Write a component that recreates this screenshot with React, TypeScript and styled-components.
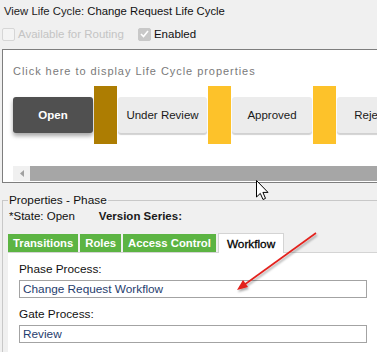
import { createGlobalStyle } from 'styled-components';
import styled from 'styled-components';

const GlobalStyle = createGlobalStyle`
  html, body {
    margin: 0;
    padding: 0;
    background: #f0f0f0;
    overflow: hidden;
  }
  body {
    font-family: 'Liberation Sans', Arial, sans-serif;
    color: #111;
  }
`;

const Page = styled.div`
  position: relative;
  width: 377px;
  height: 352px;
  overflow: hidden;
`;

const Header = styled.div`
  padding: 4px 0 0 4px;
  font-size: 11.3px;
  line-height: 14px;

  .label {
    color: #222;
  }
`;

const CheckRow = styled.div`
  display: flex;
  align-items: center;
  height: 20px;
  margin-top: 6px;
  margin-left: -2px;
  font-size: 11.5px;
`;

const Check = styled.label<{ $disabled?: boolean }>`
  display: flex;
  align-items: center;
  gap: 3px;
  margin-right: 14px;
  color: ${p => (p.$disabled ? '#c4c4c4' : '#111')};
`;

const Box = styled.span<{ $checked?: boolean }>`
  display: inline-flex;
  align-items: center;
  justify-content: center;
  width: 13px;
  height: 13px;
  box-sizing: border-box;
  border-radius: 2px;
  border: 1px solid ${p => (p.$checked ? '#c8c8c8' : '#d6d6d6')};
  background: ${p => (p.$checked ? '#c8c8c8' : '#f4f4f4')};
`;

const LifeCyclePanel = styled.div`
  margin: 5px -20px 0 2px;
  height: 134px;
  box-sizing: border-box;
  border: 1px solid #7e7e7e;
  background: #fff;
  padding: 0 0 0 10px;
  overflow: hidden;
`;

const Hint = styled.div`
  margin-top: 15px;
  height: 12px;
  font-size: 11px;
  line-height: 12px;
  letter-spacing: 0.95px;
  color: #7a7a7a;
`;

const PhaseStrip = styled.div`
  display: flex;
  align-items: center;
  margin-top: 9px;
  height: 58px;
  white-space: nowrap;
`;

const Phase = styled.div<{ $active?: boolean; $w: number }>`
  display: flex;
  align-items: center;
  justify-content: center;
  flex: none;
  width: ${p => p.$w}px;
  height: 36px;
  border-radius: 3px;
  font-size: 11.5px;
  font-weight: ${p => (p.$active ? 'bold' : 'normal')};
  color: ${p => (p.$active ? '#fff' : '#1a1a1a')};
  background: ${p => (p.$active ? '#505050' : '#ececec')};
  box-shadow: ${p =>
    p.$active ? '0 3px 4px rgba(0,0,0,0.35)' : '0 2px 1px rgba(0,0,0,0.18)'};
`;

const Gate = styled.div<{ $dark?: boolean }>`
  flex: none;
  width: 23px;
  height: 58px;
  margin: 0 1px;
  background: ${p => (p.$dark ? '#ad7d02' : '#fdc22a')};
`;

const ScrollBar = styled.div`
  display: flex;
  margin-top: 22px;
  height: 15px;
`;

const ScrollArrow = styled.div`
  width: 17px;
  display: flex;
  align-items: center;
  justify-content: center;
  background: #f0f0f0;
`;

const ScrollThumb = styled.div`
  flex: 1;
  background: #a6a6a6;
`;

const Fieldset = styled.fieldset`
  margin: 10px 0 0 2px;
  padding: 0 0 0 5px;
  border: 1px solid #c8c8c8;
  border-right: none;
  height: 160px;
  min-width: 0;

  legend {
    padding: 0 1px;
    font-size: 11.8px;
    line-height: 14px;
    color: #111;
  }
`;

const StateRow = styled.div`
  display: flex;
  gap: 24px;
  font-size: 11.5px;
  line-height: 14px;
  margin-top: 2px;
  margin-left: 1px;

  .strong {
    font-weight: bold;
    color: #1a1a1a;
  }
`;

const Tabs = styled.div`
  display: flex;
  align-items: flex-end;
  gap: 2px;
  margin-top: 9px;
  height: 20px;
`;

const Tab = styled.div<{ $active?: boolean }>`
  height: ${p => (p.$active ? '20px' : '18px')};
  box-sizing: border-box;
  padding: 0 ${p => (p.$active ? '8px' : '5px')};
  display: flex;
  align-items: center;
  font-size: ${p => (p.$active ? '11.8px' : '11.3px')};
  font-weight: ${p => (p.$active ? 'normal' : 'bold')};
  color: ${p => (p.$active ? '#000' : '#fff')};
  background: ${p => (p.$active ? '#fff' : '#5cb443')};
  border: ${p => (p.$active ? '1px solid #d4d4d4' : 'none')};
  border-bottom: none;
  position: relative;
  top: ${p => (p.$active ? '1px' : '0')};
  -webkit-text-stroke: ${p => (p.$active ? '0.3px #000' : '0')};
`;

const TabBody = styled.div`
  background: #fff;
  border-top: 1px solid #d4d4d4;
  padding: 9px 10px 20px 11px;
  height: 120px;
`;

const FieldLabel = styled.div`
  font-size: 11.8px;
  line-height: 14px;
  color: #111;
  margin-bottom: 4px;
`;

const TextBox = styled.div`
  width: 348px;
  height: 18px;
  box-sizing: border-box;
  border: 1px solid #a3a3a3;
  padding: 0 3px;
  font-size: 11.8px;
  line-height: 16px;
  color: #1f3d6e;
  margin-bottom: 9px;
`;

const Overlay = styled.svg`
  position: absolute;
  left: 0;
  top: 0;
  pointer-events: none;
`;

export default function App() {
  return (
    <Page>
      <GlobalStyle />
      <Header>
        <span className="label">View Life Cycle:</span> Change Request Life Cycle
        <CheckRow>
          <Check $disabled>
            <Box />
            Available for Routing
          </Check>
          <Check>
            <Box $checked>
              <svg width="9" height="8" viewBox="0 0 9 8">
                <path d="M1 4 L3.5 6.5 L8 1" fill="none" stroke="#fff" strokeWidth="1.6" />
              </svg>
            </Box>
            Enabled
          </Check>
        </CheckRow>
      </Header>

      <LifeCyclePanel>
        <Hint>Click here to display Life Cycle properties</Hint>
        <PhaseStrip>
          <Phase $active $w={80}>Open</Phase>
          <Gate $dark />
          <Phase $w={89}>Under Review</Phase>
          <Gate />
          <Phase $w={80}>Approved</Phase>
          <Gate />
          <Phase $w={80}>Rejected</Phase>
        </PhaseStrip>
        <ScrollBar>
          <ScrollArrow>
            <svg width="4" height="7" viewBox="0 0 4 7">
              <path d="M4 0 L0 3.5 L4 7 Z" fill="#a0a0a0" />
            </svg>
          </ScrollArrow>
          <ScrollThumb />
        </ScrollBar>
      </LifeCyclePanel>

      <Fieldset>
        <legend>Properties - Phase</legend>
        <StateRow>
          <span>*State: Open</span>
          <span className="strong">Version Series:</span>
        </StateRow>
        <Tabs>
          <Tab>Transitions</Tab>
          <Tab>Roles</Tab>
          <Tab>Access Control</Tab>
          <Tab $active>Workflow</Tab>
        </Tabs>
        <TabBody>
          <FieldLabel>Phase Process:</FieldLabel>
          <TextBox>Change Request Workflow</TextBox>
          <FieldLabel>Gate Process:</FieldLabel>
          <TextBox>Review</TextBox>
        </TabBody>
      </Fieldset>

      <Overlay width="377" height="352" viewBox="0 0 377 352">
        <defs>
          <filter id="sh" x="-20%" y="-20%" width="140%" height="140%">
            <feDropShadow dx="1" dy="2" stdDeviation="1.2" floodColor="#000" floodOpacity="0.35" />
          </filter>
        </defs>
        <g filter="url(#sh)">
          <line x1="316" y1="233" x2="244" y2="285" stroke="#e3201c" strokeWidth="1.6" />
          <path d="M237 290 L243 280 L248 287 Z" fill="#e3201c" />
        </g>
        <path
          d="M256.5 180.5 L256.5 197 L260.3 193.4 L263 199.5 L265.5 198.4 L262.9 192.4 L268 192.4 Z"
          fill="#fff"
          stroke="#000"
          strokeWidth="1"
          strokeLinejoin="round"
        />
      </Overlay>
    </Page>
  );
}
